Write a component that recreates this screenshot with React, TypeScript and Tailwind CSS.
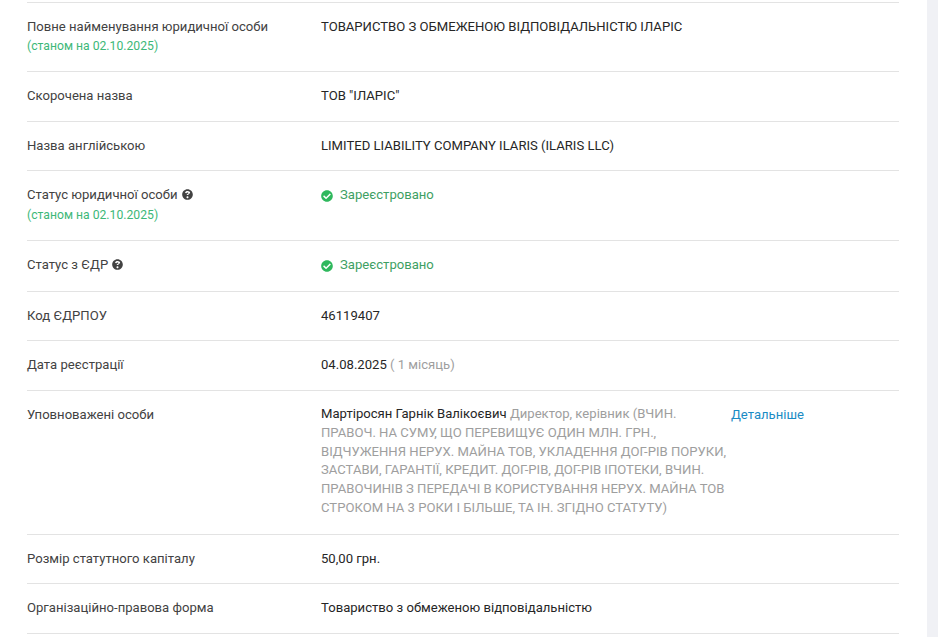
import type { ReactNode } from 'react';

function Help() {
  return (
    <svg viewBox="0 0 512 512" className="ml-[4px] inline-block h-[11px] w-[11px] align-[-1px]" fill="#424242">
      <path d="M504 256c0 137-111 248-248 248S8 393 8 256C8 119 119 8 256 8s248 111 248 248zM262.700 90c-54.500 0-89.300 23-116.500 63.800-3.500 5.300-2.400 12.400 2.700 16.300l34.700 26.300c5.200 3.900 12.600 3 16.700-2.100 17.900-22.700 30.100-35.800 57.300-35.800 20.400 0 45.700 13.100 45.700 32.900 0 15-12.400 22.700-32.600 34-23.600 13.200-54.800 29.700-54.800 70.900V240c0 0 0 0 0 0v24c0 6.600 5.400 12 12 12h56c6.600 0 12-5.400 12-12v-1.300c0-28.600 83.500-29.800 83.500-107.100C379.400 133.400 316.700 90 262.700 90zM256 336c-25.400 0-46 20.600-46 46s20.600 46 46 46 46-20.600 46-46-20.600-46-46-46z" />
    </svg>
  );
}

function Registered() {
  return (
    <span className="flex items-center gap-[7px] text-[#3e9f63]">
      <svg viewBox="0 0 512 512" className="h-[12px] w-[12px] shrink-0 translate-y-[1px]" fill="#2fb85d">
        <path d="M504 256c0 137-111 248-248 248S8 393 8 256 119 8 256 8s248 111 248 248zM227.300 387.300l184-184c6.200-6.200 6.200-16.400 0-22.600l-22.600-22.600c-6.200-6.200-16.400-6.200-22.600 0L216 308.100l-70.100-70.100c-6.200-6.200-16.400-6.200-22.600 0l-22.600 22.600c-6.200 6.200-6.200 16.400 0 22.600l104 104c6.200 6.200 16.400 6.200 22.600 0z" />
      </svg>
      Зареєстровано
    </span>
  );
}

function AsOf({ className }: { className: string }) {
  return <div className={`text-[12.200px] leading-[19px] text-[#3cb878] ${className}`}>(станом на 02.10.2025)</div>;
}

function Row({ label, children, className }: { label: ReactNode; children: ReactNode; className: string }) {
  return (
    <div className={`flex border-b border-[#e3e3e3] ${className}`}>
      <div className="w-[294px] shrink-0 text-[#424242]">{label}</div>
      <div className="min-w-0 flex-1 text-[#262626]">{children}</div>
    </div>
  );
}

export default function App() {
  return (
    <div className="h-[637px] overflow-hidden bg-[#f0f1f5] pr-[11px] font-['Roboto',sans-serif] text-[13.100px] leading-[19px]">
      <div className="h-full bg-white pl-[27px] pr-[28px] pt-[2px]">
        <div className="border-t border-[#e3e3e3] pt-[14px]" />
        <Row className="h-[55px]" label={<><div>Повне найменування юридичної особи</div><AsOf className="mt-[1px]" /></>}>
          ТОВАРИСТВО З ОБМЕЖЕНОЮ ВІДПОВІДАЛЬНІСТЮ ІЛАРІС
        </Row>
        <Row className="h-[50px] pt-[14px]" label="Скорочена назва">ТОВ "ІЛАРІС"</Row>
        <Row className="h-[49px] pt-[14px]" label="Назва англійською">LIMITED LIABILITY COMPANY ILARIS (ILARIS LLC)</Row>
        <Row className="h-[70px] pt-[14px]" label={<><div>Статус юридичної особи<Help /></div><AsOf className="mt-[2px]" /></>}>
          <Registered />
        </Row>
        <Row className="h-[51px] pt-[14px]" label={<>Статус з ЄДР<Help /></>}>
          <Registered />
        </Row>
        <Row className="h-[49px] pt-[14px]" label="Код ЄДРПОУ">46119407</Row>
        <Row className="h-[50px] pt-[14px]" label="Дата реєстрації">
          04.08.2025 <span className="text-[#9e9e9e]">( 1 місяць)</span>
        </Row>
        <Row className="h-[144px] pt-[14px]" label="Уповноважені особи">
          <div className="flex">
            <div className="w-[410px] leading-[18.800px]">
              Мартіросян Гарнік Валікоєвич{' '}
              <span className="text-[#9e9e9e]">
                Директор, керівник (ВЧИН. ПРАВОЧ. НА СУМУ, ЩО ПЕРЕВИЩУЄ ОДИН МЛН. ГРН., ВІДЧУЖЕННЯ НЕРУХ. МАЙНА ТОВ, УКЛАДЕННЯ ДОГ-РІВ ПОРУКИ, ЗАСТАВИ, ГАРАНТІЇ, КРЕДИТ. ДОГ-РІВ, ДОГ-РІВ ІПОТЕКИ, ВЧИН. ПРАВОЧИНІВ З ПЕРЕДАЧІ В КОРИСТУВАННЯ НЕРУХ. МАЙНА ТОВ СТРОКОМ НА 3 РОКИ І БІЛЬШЕ, ТА ІН. ЗГІДНО СТАТУТУ)
              </span>
            </div>
            <a className="text-[#1a8bc4]">Детальніше</a>
          </div>
        </Row>
        <Row className="h-[49px] pt-[14px]" label="Розмір статутного капіталу">50,00 грн.</Row>
        <Row className="h-[50px] pt-[14px]" label="Організаційно-правова форма">Товариство з обмеженою відповідальністю</Row>
      </div>
    </div>
  );
}
